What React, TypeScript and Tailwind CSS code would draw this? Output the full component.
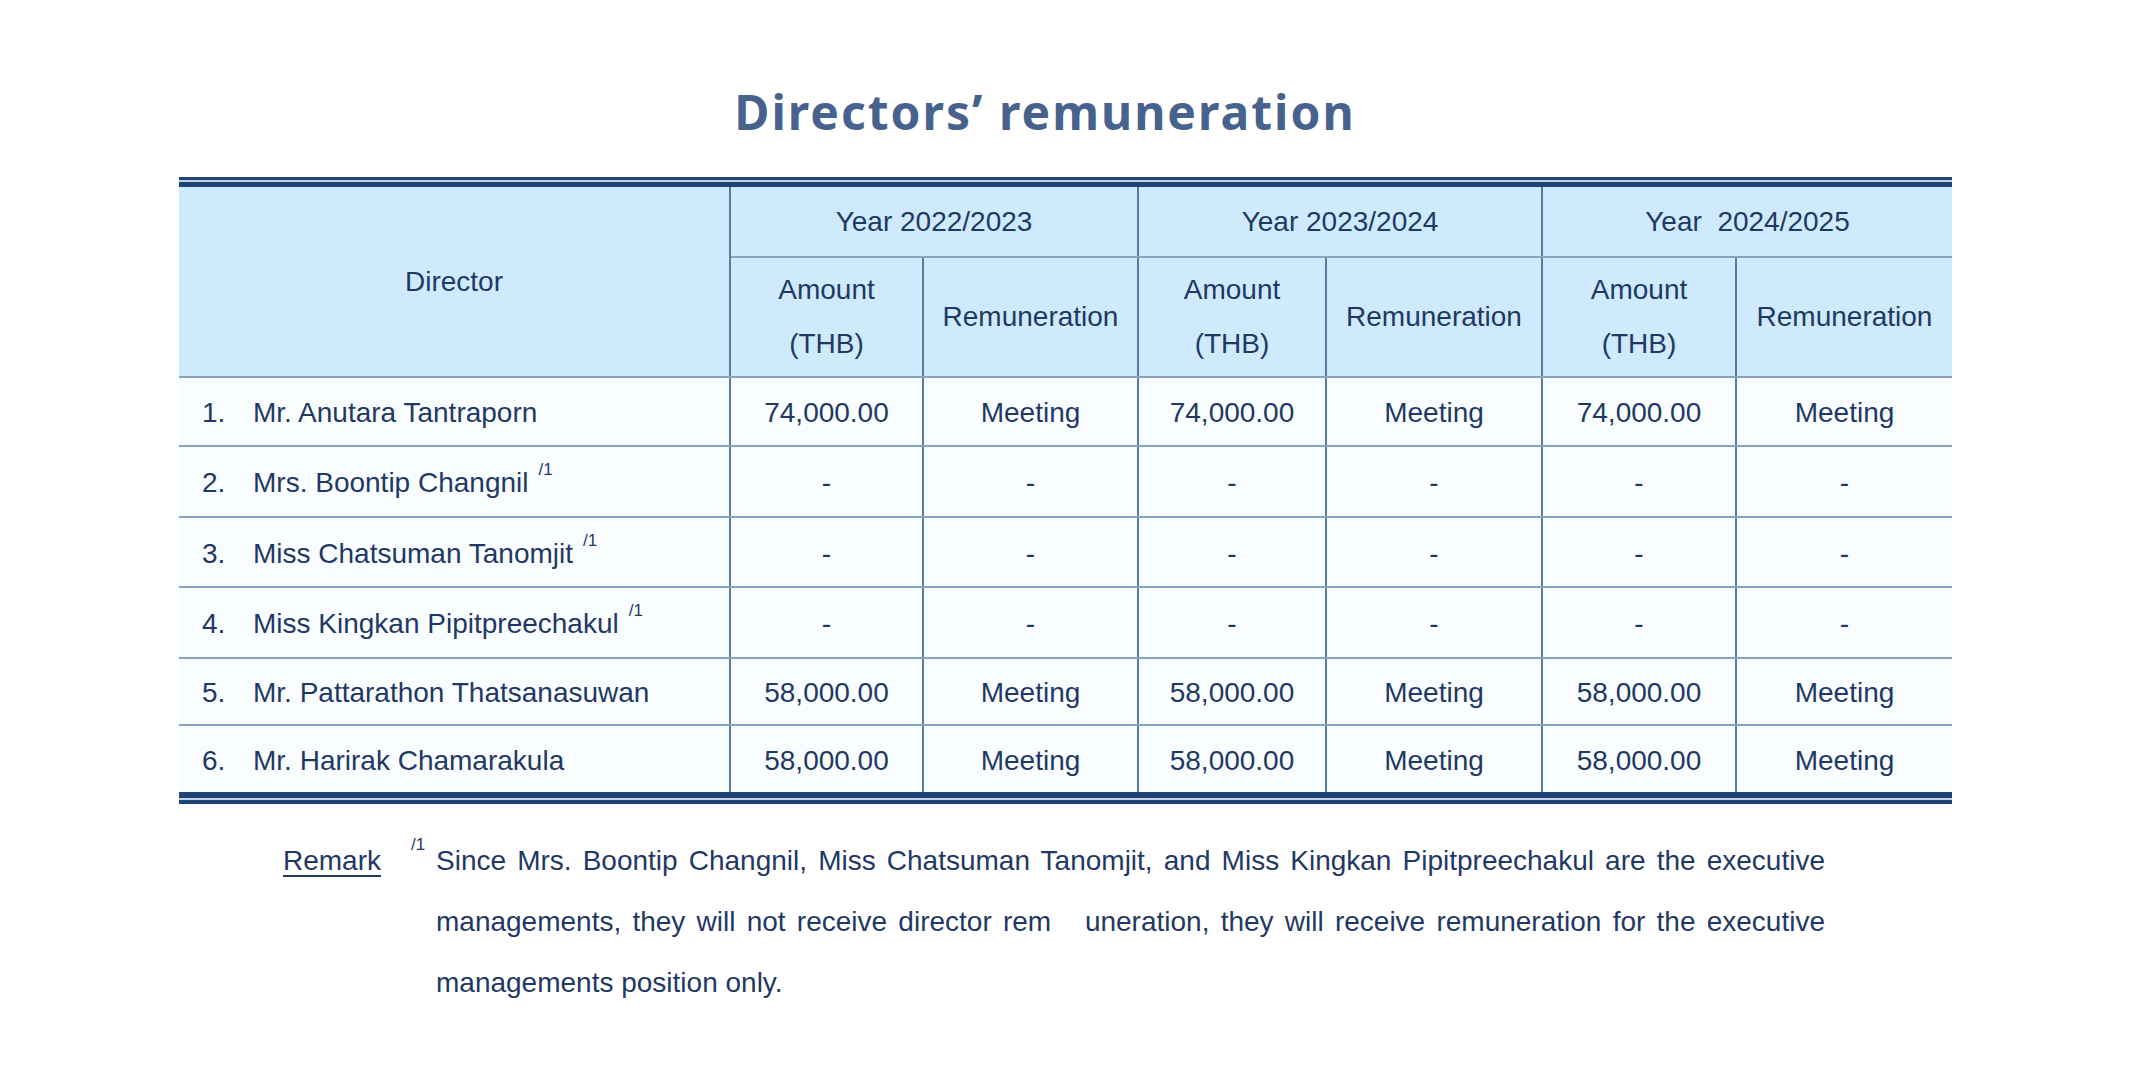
type Director = {
  no: string;
  name: string;
  note?: boolean;
  amount: string;
  kind: string;
  height: string;
};

const directors: Director[] = [
  { no: '1.', name: 'Mr. Anutara Tantraporn', amount: '74,000.00', kind: 'Meeting', height: 'h-[69px]' },
  { no: '2.', name: 'Mrs. Boontip Changnil', note: true, amount: '-', kind: '-', height: 'h-[71px]' },
  { no: '3.', name: 'Miss Chatsuman Tanomjit', note: true, amount: '-', kind: '-', height: 'h-[70px]' },
  { no: '4.', name: 'Miss Kingkan Pipitpreechakul', note: true, amount: '-', kind: '-', height: 'h-[71px]' },
  { no: '5.', name: 'Mr. Pattarathon Thatsanasuwan', amount: '58,000.00', kind: 'Meeting', height: 'h-[67px]' },
  { no: '6.', name: 'Mr. Harirak Chamarakula', amount: '58,000.00', kind: 'Meeting', height: 'h-[67px]' },
];

const years = ['Year 2022/2023', 'Year 2023/2024', 'Year  2024/2025'];

const vLine = 'border-r-2 border-r-[#5a7a9e]';
const hLine = 'border-b-2 border-b-[#8aa3bd]';

function Note() {
  return <sup className="relative -top-[17px] ml-[10px] text-[17px] leading-none">/1</sup>;
}

export default function App() {
  return (
    <div className="h-[1089px] w-[2136px] bg-white font-['Liberation_Sans',Arial,sans-serif] text-[28px] text-[#1f3964]">
      <h1 className="pr-[46px] pt-[88px] text-center font-['Noto_Sans',sans-serif] text-[48px] font-bold leading-[48px] tracking-[2px] text-[#46628d]">
        Directors’ remuneration
      </h1>

      <div className="ml-[179px] mt-[41px] w-[1773px]">
        <div className="h-[3px] bg-[#1f4575]" />
        <div className="h-[2px] bg-[#c3d2e0]" />
        <div className="h-[5px] bg-[#1f4575]" />

        <table className="w-full table-fixed border-collapse">
          <colgroup>
            <col className="w-[551px]" />
            <col className="w-[193px]" />
            <col className="w-[215px]" />
            <col className="w-[188px]" />
            <col className="w-[216px]" />
            <col className="w-[194px]" />
            <col className="w-[216px]" />
          </colgroup>
          <thead className="bg-[#cfeafc]">
            <tr className="h-[70px]">
              <th rowSpan={2} className={`${vLine} ${hLine} font-normal`}>
                Director
              </th>
              {years.map((y, i) => (
                <th
                  key={y}
                  colSpan={2}
                  className={`${i < 2 ? vLine : ''} ${hLine} whitespace-pre font-normal`}
                >
                  {y}
                </th>
              ))}
            </tr>
            <tr className="h-[120px]">
              {years.map((y, i) => (
                <>
                  <th key={`${y}-a`} className={`${vLine} ${hLine} font-normal leading-[54px]`}>
                    Amount
                    <br />
                    (THB)
                  </th>
                  <th key={`${y}-r`} className={`${i < 2 ? vLine : ''} ${hLine} font-normal`}>
                    Remuneration
                  </th>
                </>
              ))}
            </tr>
          </thead>
          <tbody className="bg-[#fafdff]">
            {directors.map((d, r) => {
              const last = r === directors.length - 1;
              const row = last ? '' : hLine;
              return (
                <tr key={d.no} className={d.height}>
                  <td className={`${vLine} ${row} pl-[23px] pt-[3px]`}>
                    <span className="inline-block w-[51px]">{d.no}</span>
                    {d.name}
                    {d.note ? <Note /> : null}
                  </td>
                  {[0, 1, 2].map((i) => (
                    <>
                      <td key={`${i}-a`} className={`${vLine} ${row} pt-[3px] text-center`}>
                        {d.amount}
                      </td>
                      <td key={`${i}-k`} className={`${i < 2 ? vLine : ''} ${row} pt-[3px] text-center`}>
                        {d.kind}
                      </td>
                    </>
                  ))}
                </tr>
              );
            })}
          </tbody>
        </table>

        <div className="h-[6px] bg-[#1f4575]" />
        <div className="h-[2px] bg-[#c3d2e0]" />
        <div className="h-[4px] bg-[#1f4575]" />
      </div>

      <div className="mt-[26px] flex leading-[61px]">
        <div className="ml-[283px] w-[128px] shrink-0">
          <span className="underline decoration-2 underline-offset-[5px]">Remark</span>
        </div>
        <div className="w-[25px] shrink-0">
          <span className="relative -top-[20px] text-[17px]">/1</span>
        </div>
        <div className="w-[1389px]">
          <p className="text-justify [text-align-last:justify]">
            Since Mrs. Boontip Changnil, Miss Chatsuman Tanomjit, and Miss Kingkan Pipitpreechakul are the executive
          </p>
          <p className="text-justify [text-align-last:justify]">
            managements, they will not receive director rem{'\u00a0\u00a0'} uneration, they will receive remuneration for the executive
          </p>
          <p>managements position only.</p>
        </div>
      </div>
    </div>
  );
}
